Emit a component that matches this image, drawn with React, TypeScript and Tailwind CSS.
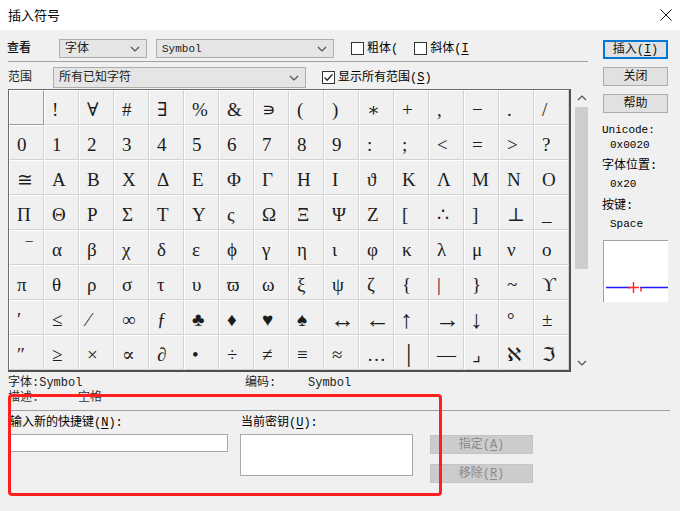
import { ReactNode } from "react";

const rows = [
    [" ", "!", "∀", "#", "∃", "%", "&", "∍", "(", ")", "∗", "+", ",", "−", ".", "/"],
    ["0", "1", "2", "3", "4", "5", "6", "7", "8", "9", ":", ";", "<", "=", ">", "?"],
    ["≅", "Α", "Β", "Χ", "Δ", "Ε", "Φ", "Γ", "Η", "Ι", "ϑ", "Κ", "Λ", "Μ", "Ν", "Ο"],
    ["Π", "Θ", "Ρ", "Σ", "Τ", "Υ", "ς", "Ω", "Ξ", "Ψ", "Ζ", "[", "∴", "]", "⊥", "_"],
    ["‾", "α", "β", "χ", "δ", "ε", "ϕ", "γ", "η", "ι", "φ", "κ", "λ", "μ", "ν", "ο"],
    ["π", "θ", "ρ", "σ", "τ", "υ", "ϖ", "ω", "ξ", "ψ", "ζ", "{", "|", "}", "~", "ϒ"],
    ["′", "≤", "⁄", "∞", "ƒ", "♣", "♦", "♥", "♠", "↔", "←", "↑", "→", "↓", "°", "±"],
    ["″", "≥", "×", "∝", "∂", "•", "÷", "≠", "≡", "≈", "…", "│", "—", "⌟", "ℵ", "ℑ"],
];

// arrows are drawn bigger in the Symbol font
const bigGlyphs = ["↔", "←", "↑", "→", "↓"];

const Chevron = ({ up = false }: { up?: boolean }) => (
    <svg width="10" height="6" viewBox="0 0 10 6" className="shrink-0">
        <path
            d={up ? "M1 5 L5 1 L9 5" : "M1 1 L5 5 L9 1"}
            fill="none"
            stroke="#505050"
            strokeWidth="1.2"
        />
    </svg>
);

const Dropdown = ({ w, h, children }: { w: string; h: string; children: ReactNode }) => (
    <div
        className={`${w} ${h} flex items-center justify-between border border-[#adadad] bg-[#e5e5e5] pl-[5px] pr-[6px] text-[#222]`}
    >
        <span className="leading-none">{children}</span>
        <Chevron />
    </div>
);

const Checkbox = ({ checked = false }: { checked?: boolean }) => (
    <div className="w-[13px] h-[13px] shrink-0 border border-[#333] bg-white flex items-center justify-center">
        {checked && (
            <svg width="11" height="11" viewBox="0 0 11 11">
                <path d="M1.5 5.5 L4.2 8.2 L9.5 2.2" fill="none" stroke="#222" strokeWidth="1.3" />
            </svg>
        )}
    </div>
);

const U = ({ children }: { children: ReactNode }) => <span className="underline underline-offset-2">{children}</span>;

const Button = ({ children, focus = false, disabled = false, w = "w-[65px]" }: { children: ReactNode; focus?: boolean; disabled?: boolean; w?: string }) => (
    <div
        className={`${w} h-[19px] flex items-center justify-center leading-none ${
            disabled
                ? "bg-[#cccccc] border border-[#c4c4c4] text-[#8a8a8a]"
                : focus
                ? "bg-[#e1e1e1] border-2 border-[#0078d7] text-[#111]"
                : "bg-[#e1e1e1] border border-[#adadad] text-[#111]"
        }`}
    >
        {children}
    </div>
);

const Cell = ({ ch, sel }: { ch: string; sel: boolean }) => {
    const size = bigGlyphs.includes(ch)
        ? "text-[25px] pl-[5px]"
        : ch === "‾"
        ? "text-[19px] pl-[16px]"
        : "text-[19px] pl-[7px]";
    return (
        <div
            className={`w-[35px] h-[35px] border border-t-white border-l-white pt-[5px] leading-[28px] text-[#1c1c1c] whitespace-pre overflow-hidden ${
                sel ? "border-r-[#9a9a9a] border-b-[#9a9a9a]" : "border-r-[#d2d2d2] border-b-[#d2d2d2]"
            } ${size}`}
            style={{ fontFamily: '"Liberation Serif", "DejaVu Serif", "DejaVu Sans", serif' }}
        >
            {ch}
        </div>
    );
};

export default function App() {
    return (
        <div
            className="relative w-[680px] h-[511px] overflow-hidden bg-[#f0f0f0] text-[12px] text-black"
            style={{ fontFamily: '"Liberation Mono", "Noto Sans CJK SC", monospace' }}
        >
            {/* title bar */}
            <div className="h-[30px] bg-white flex items-center justify-between pl-[8px] pr-[8px]">
                <span className="text-[13px]" style={{ fontFamily: '"Noto Sans CJK SC", sans-serif' }}>
                    插入符号
                </span>
                <svg width="12" height="12" viewBox="0 0 12 12">
                    <path d="M0.5 0.5 L11.5 11.5 M11.5 0.5 L0.5 11.5" stroke="#111" strokeWidth="1" />
                </svg>
            </div>

            <div className="flex pt-[9px] pl-[8px]">
                {/* left */}
                <div className="w-[582px] flex flex-col">
                    <div className="h-[19px] flex items-center">
                        <span className="w-[52px] -ml-px font-medium text-[#111]">查看</span>
                        <Dropdown w="w-[88px]" h="h-[19px]">字体</Dropdown>
                        <div className="w-[9px]" />
                        <Dropdown w="w-[178px]" h="h-[19px]">
                            <span className="text-[11px]">Symbol</span>
                        </Dropdown>
                        <div className="ml-[17px] flex items-center gap-[3px]">
                            <Checkbox />
                            <span>粗体(</span>
                        </div>
                        <div className="ml-[16px] flex items-center gap-[3px]">
                            <Checkbox />
                            <span>斜体(<U>I</U></span>
                        </div>
                    </div>
                    <div className="mt-[3px] w-[580px] h-px bg-[#a0a0a0]" />
                    <div className="mt-[5px] h-[21px] flex items-center">
                        <span className="w-[45px] text-[#222]">范围</span>
                        <Dropdown w="w-[253px]" h="h-[21px]">所有已知字符</Dropdown>
                        <div className="ml-[16px] flex items-center gap-[3px]">
                            <Checkbox checked />
                            <span>显示所有范围(<U>S</U>)</span>
                        </div>
                    </div>
                    <div className="mt-px flex">
                        <div className="border-t border-l border-[#6d6d6d] border-r-2 border-b-2 border-r-[#4f4f4f] border-b-[#4f4f4f] grid grid-cols-[repeat(16,35px)]">
                            {rows.flatMap((r, ri) =>
                                r.map((ch, ci) => <Cell key={`${ri}-${ci}`} ch={ch} sel={ri === 0 && ci === 0} />)
                            )}
                        </div>
                        <div className="ml-[2px] w-[17px] flex flex-col items-center">
                            <div className="h-[18px] flex items-center justify-center">
                                <Chevron up />
                            </div>
                            <div className="w-[13px] h-[162px] bg-[#cdcdcd]" />
                            <div className="flex-1" />
                            <div className="h-[18px] flex items-center justify-center">
                                <Chevron />
                            </div>
                        </div>
                    </div>
                </div>

                {/* right */}
                <div className="ml-[13px] w-[65px] pt-px flex flex-col">
                    <Button focus>
                        插入(<U>I</U>)
                    </Button>
                    <div className="mt-[8px]">
                        <Button>关闭</Button>
                    </div>
                    <div className="mt-[8px]">
                        <Button>帮助</Button>
                    </div>
                    <div className="mt-[10px] leading-[15px] text-[11px] -ml-px">Unicode:</div>
                    <div className="leading-[15px] text-[11px] pl-[7px]">0x0020</div>
                    <div className="mt-[6px] leading-[15px] -ml-px">字体位置:</div>
                    <div className="mt-[3px] leading-[15px] text-[11px] pl-[7px]">0x20</div>
                    <div className="mt-[7px] leading-[15px] -ml-px">按键:</div>
                    <div className="mt-[3px] leading-[15px] text-[11px] pl-[7px]">Space</div>
                    <div className="mt-[8px] h-[62px] bg-white border-t border-l border-[#a0a0a0]">
                        <svg width="64" height="61" viewBox="0 0 64 61">
                            <path d="M2 46.5 H27 M36 46.5 H64" stroke="#1a1aff" strokeWidth="1.3" />
                            <path d="M24 46.5 H35 M29.5 41 V52" stroke="#ff2a2a" strokeWidth="1.5" />
                            <path d="M37 46.5 V50.5" stroke="#ff2a2a" strokeWidth="1.5" />
                        </svg>
                    </div>
                </div>
            </div>

            {/* info */}
            <div className="pl-[8px] mt-[4px]">
                <div className="flex leading-[15px] text-[#222]">
                    <span className="w-[237px]">字体:Symbol</span>
                    <span className="w-[63px]">编码:</span>
                    <span>Symbol</span>
                </div>
                <div className="flex leading-[15px] text-[#333]">
                    <span className="w-[70px] shrink-0">描述:</span>
                    <span>空格</span>
                </div>
                <div className="mt-[4px] w-[662px] h-px bg-[#a0a0a0]" />
                <div className="mt-[5px] flex">
                    <div className="w-[220px] flex flex-col">
                        <span className="leading-[15px] pl-[2px]">
                            输入新的快捷键(<U>N</U>):
                        </span>
                        <div className="mt-[3px] h-[18px] bg-white border border-[#a8a8a8]" />
                    </div>
                    <div className="ml-[12px] w-[173px] flex flex-col">
                        <span className="leading-[15px] pl-px">
                            当前密钥(<U>U</U>):
                        </span>
                        <div className="mt-[3px] h-[42px] bg-white border border-[#a8a8a8]" />
                    </div>
                    <div className="ml-[17px] pt-[19px] flex flex-col gap-[10px]">
                        <Button disabled w="w-[103px]">
                            指定(<U>A</U>)
                        </Button>
                        <Button disabled w="w-[103px]">
                            移除(<U>R</U>)
                        </Button>
                    </div>
                </div>
            </div>

            {/* annotation */}
            <div className="absolute left-[8px] top-[394px] w-[434px] h-[102px] border-[3px] border-[#ff1f1f] rounded-[4px]" />
        </div>
    );
}
